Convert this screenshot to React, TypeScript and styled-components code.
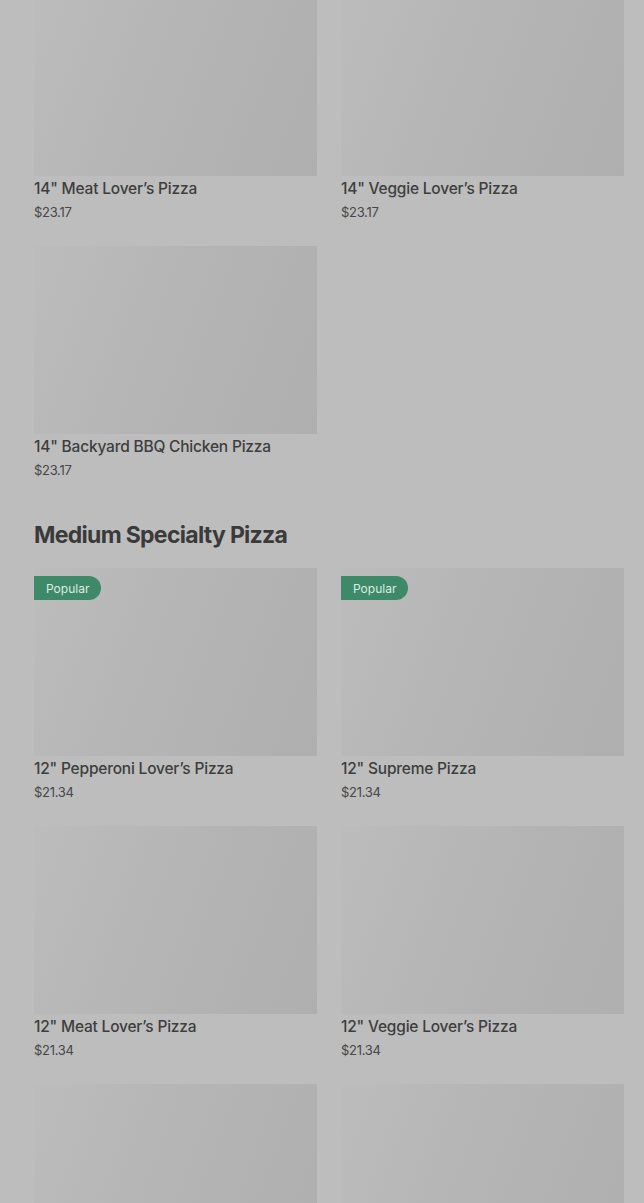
import React from "react";
import styled, { createGlobalStyle } from "styled-components";

const Global = createGlobalStyle`
  html, body { margin: 0; padding: 0; background: #bdbdbd; overflow: hidden; }
  body { font-family: Inter, "Open Sans", "Liberation Sans", sans-serif; }
`;

const Page = styled.div`
  margin-top: -12px;
  padding: 0 20px 0 34px;
  background: #bdbdbd;
  height: 1215px;
  overflow: hidden;
`;

const Section = styled.section`
  display: flex;
  flex-direction: column;
`;

const Heading = styled.h2`
  margin: 15px 0 17px;
  font-size: 23px;
  line-height: 32px;
  font-weight: 700;
  letter-spacing: -0.7px;
  color: #3a3a3a;
`;

const Grid = styled.div`
  display: grid;
  grid-template-columns: 283px 283px;
  column-gap: 24px;
`;

const Card = styled.div`
  display: flex;
  flex-direction: column;
  padding-bottom: 24px;
`;

const Thumb = styled.div`
  position: relative;
  height: 188px;
  background: linear-gradient(110deg, #bcbcbc 0%, #b5b5b5 45%, #afafaf 100%);
`;

const Badge = styled.span`
  position: absolute;
  top: 8px;
  left: 0;
  height: 24px;
  padding: 0 12px;
  display: flex;
  align-items: center;
  font-size: 12px;
  color: #dcebe2;
  background: #3e8a68;
  border-radius: 0 12px 12px 0;
`;

const Title = styled.div`
  margin-top: 2px;
  font-size: 15.5px;
  line-height: 22px;
  font-weight: 500;
  letter-spacing: -0.2px;
  color: #3e3e3e;
`;

const Price = styled.div`
  margin-top: 2px;
  font-size: 13px;
  line-height: 20px;
  color: #474747;
  letter-spacing: -0.3px;
`;

type Item = { name?: string; price?: string; popular?: boolean };

const large: Item[] = [
  { name: '14" Meat Lover\u2019s Pizza', price: "$23.17" },
  { name: '14" Veggie Lover\u2019s Pizza', price: "$23.17" },
  { name: '14" Backyard BBQ Chicken Pizza', price: "$23.17" },
];

const medium: Item[] = [
  { name: '12" Pepperoni Lover\u2019s Pizza', price: "$21.34", popular: true },
  { name: '12" Supreme Pizza', price: "$21.34", popular: true },
  { name: '12" Meat Lover\u2019s Pizza', price: "$21.34" },
  { name: '12" Veggie Lover\u2019s Pizza', price: "$21.34" },
  {},
  {},
];

const ItemCard = ({ item }: { item: Item }) => (
  <Card>
    <Thumb>{item.popular && <Badge>Popular</Badge>}</Thumb>
    {item.name && <Title>{item.name}</Title>}
    {item.price && <Price>{item.price}</Price>}
  </Card>
);

export default function App() {
  return (
    <>
      <Global />
      <Page>
        <Section>
          <Grid>
            {large.map((it, i) => (
              <ItemCard key={i} item={it} />
            ))}
          </Grid>
        </Section>
        <Section>
          <Heading>Medium Specialty Pizza</Heading>
          <Grid>
            {medium.map((it, i) => (
              <ItemCard key={i} item={it} />
            ))}
          </Grid>
        </Section>
      </Page>
    </>
  );
}
